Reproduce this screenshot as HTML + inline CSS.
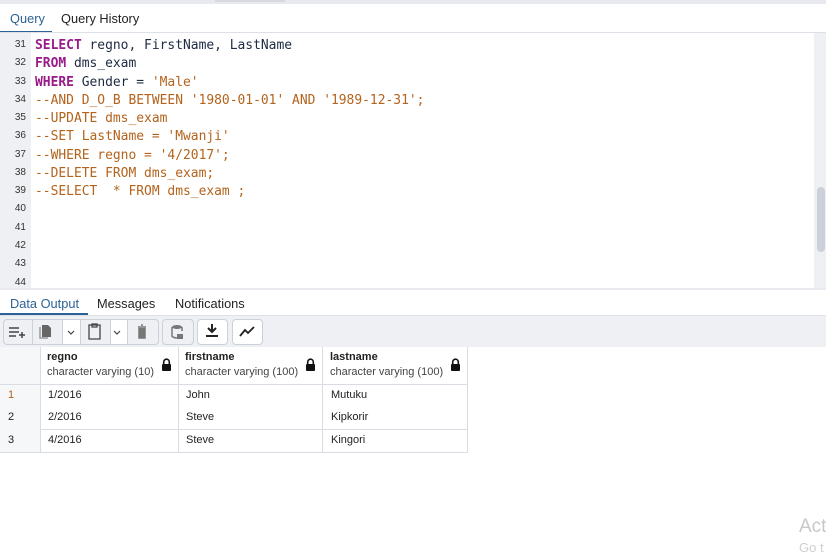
<!DOCTYPE html>
<html><head><style>
*{box-sizing:border-box;margin:0;padding:0}
body{width:826px;height:551px;overflow:hidden;background:#fff;font-family:"Liberation Sans",sans-serif;position:relative}
.abs{position:absolute}
.mono{font-family:"DejaVu Sans Mono","Liberation Mono",monospace;font-size:12.95px}
.kw{color:#991a89;font-weight:bold}
.cm{color:#b4631c}
.tx{color:#1e2b42}
.ln{position:absolute;left:0;width:26px;text-align:right;font-size:10px;color:#333;font-family:"Liberation Sans",sans-serif}
.tab{position:absolute;font-size:12.8px;color:#222}
.btn{position:absolute;top:319px;height:26px;border:1px solid #ccd1d9;background:#eef0f3}
.cell{position:absolute;font-size:11px;color:#222}
</style></head><body>
<div class="abs" style="left:0;top:0;width:826px;height:4px;background:#e7e9ee"></div>
<div class="abs" style="left:215px;top:0;width:70px;height:2px;background:#d7d9de"></div>
<div class="tab" style="left:10px;top:11px;color:#2c6296">Query</div>
<div class="abs" style="left:0;top:31px;width:52px;height:2px;background:#2c6296"></div>
<div class="tab" style="left:61px;top:11px">Query History</div>
<div class="abs" style="left:0;top:32px;width:826px;height:1px;background:#dde0e6"></div>
<div class="abs" style="left:0;top:33px;width:31px;height:255px;background:#eef0f3"></div>
<div class="abs" style="left:814px;top:33px;width:12px;height:255px;background:#eef0f3"></div>
<div class="abs" style="left:817px;top:187px;width:8px;height:65px;background:#cbd0da;border-radius:4px"></div>
<div class="abs" style="left:0;top:288px;width:826px;height:2px;background:#e7e9ee"></div>
<div class="mono abs" style="left:35px;top:37px;line-height:18.25px;white-space:pre"><div><span class="kw">SELECT</span><span class="tx"> regno, FirstName, LastName</span></div><div><span class="kw">FROM</span><span class="tx"> dms_exam</span></div><div><span class="kw">WHERE</span><span class="tx"> Gender = </span><span class="cm">'Male'</span></div><div class="cm">--AND D_O_B BETWEEN '1980-01-01' AND '1989-12-31';</div><div class="cm">--UPDATE dms_exam</div><div class="cm">--SET LastName = 'Mwanji'</div><div class="cm">--WHERE regno = '4/2017';</div><div class="cm">--DELETE FROM dms_exam;</div><div class="cm">--SELECT  * FROM dms_exam ;</div></div>
<div class="ln" style="top:39px">31</div><div class="ln" style="top:57px">32</div><div class="ln" style="top:76px">33</div><div class="ln" style="top:94px">34</div><div class="ln" style="top:112px">35</div><div class="ln" style="top:130px">36</div><div class="ln" style="top:149px">37</div><div class="ln" style="top:167px">38</div><div class="ln" style="top:185px">39</div><div class="ln" style="top:203px">40</div><div class="ln" style="top:222px">41</div><div class="ln" style="top:240px">42</div><div class="ln" style="top:258px">43</div><div class="ln" style="top:277px">44</div>

<div class="tab" style="left:10px;top:296px;color:#2c6296">Data Output</div>
<div class="abs" style="left:0;top:313px;width:88px;height:2px;background:#2c6296"></div>
<div class="tab" style="left:97px;top:296px">Messages</div>
<div class="tab" style="left:175px;top:296px">Notifications</div>
<div class="abs" style="left:0;top:315px;width:826px;height:32px;background:#eef0f3;border-top:1px solid #dde0e6"></div>
<div class="btn" style="left:3px;width:30px;border-radius:4px 0 0 4px"></div>
<div class="btn" style="left:32px;width:31px"></div>
<div class="btn" style="left:62px;width:19px;background:#fff"></div>
<div class="btn" style="left:80px;width:31px"></div>
<div class="btn" style="left:110px;width:18px;background:#fff"></div>
<div class="btn" style="left:127px;width:32px;border-radius:0 4px 4px 0"></div>
<div class="btn" style="left:162px;width:32px;border-radius:4px"></div>
<div class="btn" style="left:197px;width:31px;border-radius:4px;background:#fff"></div>
<div class="btn" style="left:232px;width:31px;border-radius:4px;background:#fff"></div>
<svg class="abs" style="left:0;top:315px" width="270" height="32" fill="none" stroke="#444" stroke-width="1.5">
<path d="M9 13h10M9 17h10M9 21h7M19 20h6M22 17v6"/>
<path d="M42 10h6l3 3v9h-9z" fill="#666" stroke="none"/><path d="M40 12v11h8" stroke="#999"/>
<path d="M68 16l3 3 3-3M114 16l3 3 3-3" stroke-width="1.2"/>
<path d="M89 10h11v14h-11z M92 9h5v3h-5z" stroke-width="1.3"/>
<path d="M138 12h8M139 13v10h6v-10M141 10h2" stroke="#777" fill="#777"/>
<ellipse cx="177" cy="12" rx="5" ry="2" fill="#777" stroke="none"/><path d="M172 12v9c0 1 3 2 5 2M182 12v4" stroke="#777"/><path d="M177 19h6v5h-6z" fill="#777" stroke="none"/>
<path d="M212 9v8M208 13l4 4 4-4M206 21h12" stroke="#222" stroke-width="2"/>
<path d="M240 21l5-6 3 3 6-6" stroke="#222" stroke-width="1.8"/>
</svg>

<div class="abs" style="left:0;top:347px;width:468px;height:106px">
<div class="abs" style="left:0;top:0;width:40px;height:106px;background:#f6f7f9"></div>
<div class="abs" style="left:40px;top:0;width:1px;height:106px;background:#d8dce3"></div>
<div class="abs" style="left:178px;top:0;width:1px;height:106px;background:#d8dce3"></div>
<div class="abs" style="left:322px;top:0;width:1px;height:106px;background:#d8dce3"></div>
<div class="abs" style="left:467px;top:0;width:1px;height:106px;background:#d8dce3"></div>
<div class="abs" style="left:0;top:37px;width:468px;height:1px;background:#d8dce3"></div>
<div class="abs" style="left:40px;top:82px;width:428px;height:1px;background:#d8dce3"></div>
<div class="abs" style="left:0;top:105px;width:468px;height:1px;background:#d8dce3"></div>
</div>
<div class="cell" style="left:47px;top:351px;font-weight:bold">regno</div>
<div class="cell" style="left:47px;top:366px;color:#444">character varying (10)</div>
<div class="cell" style="left:185px;top:351px;font-weight:bold">firstname</div>
<div class="cell" style="left:185px;top:366px;color:#444">character varying (100)</div>
<div class="cell" style="left:330px;top:351px;font-weight:bold">lastname</div>
<div class="cell" style="left:330px;top:366px;color:#444">character varying (100)</div>
<svg class="abs" style="left:161px;top:358px" width="11" height="13"><path d="M2.7 6V4a2.8 2.8 0 015.6 0V6" stroke="#111" stroke-width="1.6" fill="none"/><rect x="1" y="6" width="9" height="7" rx="1" fill="#111"/></svg>
<svg class="abs" style="left:305px;top:358px" width="11" height="13"><path d="M2.7 6V4a2.8 2.8 0 015.6 0V6" stroke="#111" stroke-width="1.6" fill="none"/><rect x="1" y="6" width="9" height="7" rx="1" fill="#111"/></svg>
<svg class="abs" style="left:450px;top:358px" width="11" height="13"><path d="M2.7 6V4a2.8 2.8 0 015.6 0V6" stroke="#111" stroke-width="1.6" fill="none"/><rect x="1" y="6" width="9" height="7" rx="1" fill="#111"/></svg>
<div class="cell" style="left:8px;top:389px;color:#b4631c">1</div><div class="cell" style="left:48px;top:389px">1/2016</div><div class="cell" style="left:186px;top:389px">John</div><div class="cell" style="left:331px;top:389px">Mutuku</div>
<div class="cell" style="left:8px;top:411px">2</div><div class="cell" style="left:48px;top:411px">2/2016</div><div class="cell" style="left:186px;top:411px">Steve</div><div class="cell" style="left:331px;top:411px">Kipkorir</div>
<div class="cell" style="left:8px;top:434px">3</div><div class="cell" style="left:48px;top:434px">4/2016</div><div class="cell" style="left:186px;top:434px">Steve</div><div class="cell" style="left:331px;top:434px">Kingori</div>
<div class="abs" style="left:799px;top:516px;font-size:19px;color:#c8c8c8">Act</div>
<div class="abs" style="left:799px;top:540px;font-size:13px;color:#cfcfcf">Go t</div>
</body></html>
